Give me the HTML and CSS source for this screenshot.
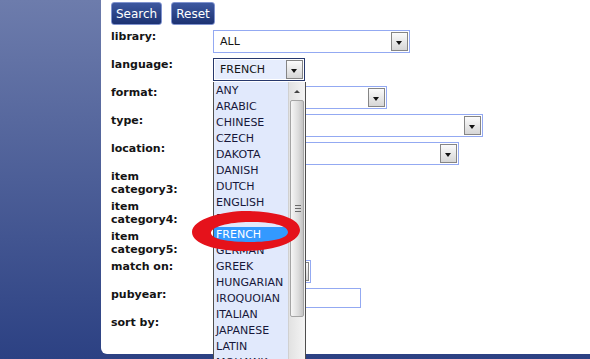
FILE: index.html
```html
<!DOCTYPE html>
<html lang="en">
<head>
    <meta charset="UTF-8">
    <title>Catalog Search</title>
    <link rel="stylesheet" href="styles.css">
</head>
<body>

<div class="panel">
    <div class="actions">
        <button class="btn">Search</button>
        <button class="btn">Reset</button>
    </div>

    <div class="form">
        <label class="lbl">library:</label>
        <div class="sel w-library"><span class="val">ALL</span><span class="arrow"></span></div>

        <label class="lbl">language:</label>
        <div class="sel w-language focus">
            <span class="val">FRENCH</span><span class="arrow"></span>
            <div class="list">
                <div class="opt">ANY</div>
                <div class="opt">ARABIC</div>
                <div class="opt">CHINESE</div>
                <div class="opt">CZECH</div>
                <div class="opt">DAKOTA</div>
                <div class="opt">DANISH</div>
                <div class="opt">DUTCH</div>
                <div class="opt">ENGLISH</div>
                <div class="opt">FINNISH</div>
                <div class="opt picked">FRENCH</div>
                <div class="opt">GERMAN</div>
                <div class="opt">GREEK</div>
                <div class="opt">HUNGARIAN</div>
                <div class="opt">IROQUOIAN</div>
                <div class="opt">ITALIAN</div>
                <div class="opt">JAPANESE</div>
                <div class="opt">LATIN</div>
                <div class="opt">MOHAWK</div>
                <div class="scroll">
                    <div class="up"></div>
                    <div class="thumb"><span class="grip"></span></div>
                </div>
            </div>
        </div>

        <label class="lbl">format:</label>
        <div class="sel w-format"><span class="val"></span><span class="arrow"></span></div>

        <label class="lbl">type:</label>
        <div class="sel w-type"><span class="val"></span><span class="arrow"></span></div>

        <label class="lbl">location:</label>
        <div class="sel w-location"><span class="val"></span><span class="arrow"></span></div>

        <label class="lbl">item category3:</label>
        <div class="sel w-small"><span class="val"></span><span class="arrow"></span></div>

        <label class="lbl">item category4:</label>
        <div class="sel w-small"><span class="val"></span><span class="arrow"></span></div>

        <label class="lbl">item category5:</label>
        <div class="sel w-small"><span class="val"></span><span class="arrow"></span></div>

        <label class="lbl">match on:</label>
        <div class="sel w-match"><span class="val"></span><span class="arrow"></span></div>

        <label class="lbl">pubyear:</label>
        <input class="field" type="text">

        <label class="lbl">sort by:</label>
        <div class="sel w-small"><span class="val"></span><span class="arrow"></span></div>
    </div>

    <!-- hand drawn circle round the chosen language -->
    <svg class="mark" width="120" height="50" viewBox="0 0 120 50">
        <path fill="#e5121b" fill-rule="evenodd"
              d="M4 26 C4 12 40 4 62 5 C90 6 112 12 112 24 C112 36 86 45 56 45 C28 45 4 38 4 26 Z
                 M23 27 C23 21 40 16 62 16 C86 16 100 20 100 26 C100 32 86 36 62 36 C40 36 23 33 23 27 Z"/>
    </svg>
</div>

</body>
</html>
```

FILE: styles.css
```css
html, body {
    margin: 0;
    height: 100%;
    overflow: hidden;
}
body {
    background: linear-gradient(#6d7cac, #2c4183 359px);
    font-family: "DejaVu Sans", Verdana, sans-serif;
    color: #141414;
}
.panel {
    position: relative;
    margin-left: 101px;
    height: 354px;
    box-sizing: border-box;
    padding: 2px 0 0 10px;
    background-color: #fff;
    border-bottom-left-radius: 6px;
}
.actions {
    display: flex;
    gap: 9px;
    margin-bottom: 3px;
}
.btn {
    height: 23px;
    padding: 0 4px;
    font-family: "DejaVu Sans", Verdana, sans-serif;
    font-size: 12px;
    color: #fff;
    background: linear-gradient(#3d58a0, #1c3272);
    border: 1px solid #8093cf;
    border-radius: 3px;
}
.form {
    display: grid;
    grid-template-columns: 90px auto;
    grid-template-rows: repeat(5, 28px) repeat(3, 30px) repeat(3, 28px);
    column-gap: 12px;
}
.lbl {
    padding-top: 2px;
    font-size: 11px;
    font-weight: bold;
    line-height: 13px;
}
.sel {
    position: relative;
    justify-self: start;
    display: flex;
    height: 23px;
    margin-top: 2px;
    box-sizing: border-box;
    padding: 1px;
    border: 1px solid #93a9f2;
    background-color: #fff;
}
.val {
    flex: 1;
    padding-left: 5px;
    font-size: 11px;
    line-height: 19px;
}
.arrow {
    position: relative;
    width: 17px;
    box-sizing: border-box;
    border: 1px solid #858585;
    background: linear-gradient(#fbfbfb, #d6d6d6);
}
.arrow::after {
    content: "";
    position: absolute;
    left: 4px;
    top: 8px;
    border-left: 3.5px solid transparent;
    border-right: 3.5px solid transparent;
    border-top: 4px solid #111;
}
.sel.focus {
    border-color: #27386c;
}
.sel.focus .val {
    background-color: #e6edfd;
}
.w-library { width: 197px; }
.w-language { width: 92px; }
.w-format { width: 174px; }
.w-type { width: 270px; }
.w-location { width: 246px; }
.w-small { width: 88px; }
.w-match { width: 98px; }
.field {
    justify-self: start;
    width: 148px;
    height: 20px;
    margin: 2px 0 0;
    box-sizing: border-box;
    border: 1px solid #93a9f2;
    padding: 0;
}
.list {
    position: absolute;
    z-index: 2;
    left: -1px;
    top: 23px;
    width: 93px;
    padding-top: 1px;
    box-sizing: border-box;
    border: 1px solid #4e4e4e;
    border-top: none;
    background-color: #e1e9fc;
}
.opt {
    height: 16px;
    padding-left: 2px;
    margin-right: 16px;
    font-size: 11px;
    line-height: 16px;
    color: #17173a;
}
.opt.picked {
    background-color: #3399ff;
    color: #fff;
}
.scroll {
    position: absolute;
    top: 0;
    right: 0;
    bottom: 0;
    width: 16px;
    background: linear-gradient(90deg, #e2e2e2, #f4f4f4);
    border-left: 1px solid #d0d0d0;
}
.up {
    position: relative;
    height: 18px;
}
.up::after {
    content: "";
    position: absolute;
    left: 5px;
    top: 8px;
    border-left: 3px solid transparent;
    border-right: 3px solid transparent;
    border-bottom: 3px solid #444;
}
.thumb {
    position: relative;
    height: 217px;
    margin: 0 1px;
    box-sizing: border-box;
    border: 1px solid #a4a4a4;
    border-radius: 2px;
    background: linear-gradient(90deg, #f6f6f6, #dcdcdc 60%, #c4c4c4);
}
.grip {
    position: absolute;
    left: 4px;
    top: 104px;
    width: 6px;
    height: 9px;
    background: repeating-linear-gradient(#6a6a6a 0 1px, transparent 1px 3px);
}
.mark {
    position: absolute;
    z-index: 3;
    left: 87px;
    top: 206px;
}
```
